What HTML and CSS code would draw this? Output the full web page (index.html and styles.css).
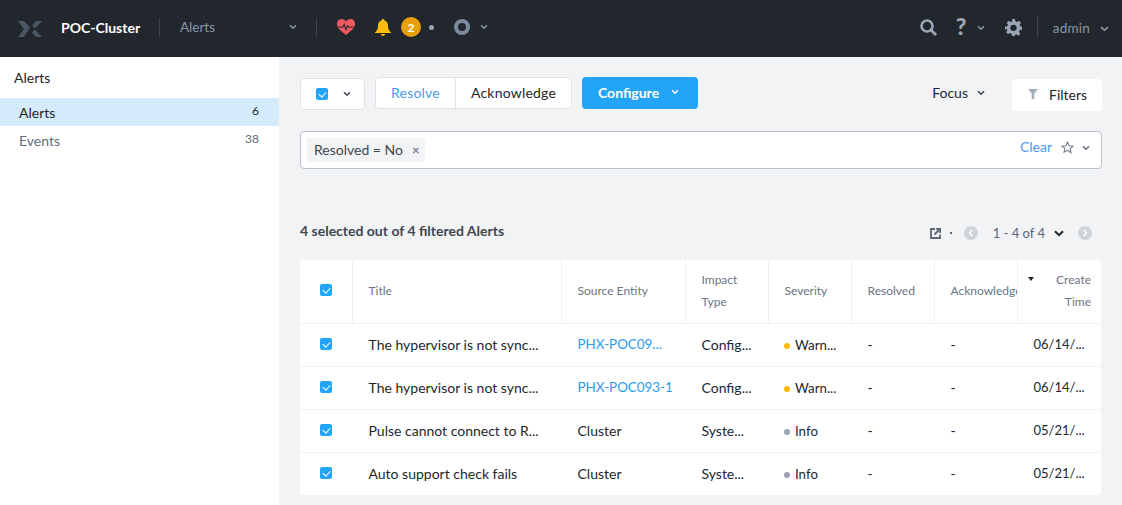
FILE: index.html
```html
<!DOCTYPE html>
<html lang="en">
<head>
<meta charset="utf-8">
<title>Alerts</title>
<link rel="stylesheet" href="styles.css">
</head>
<body>
<header class="topbar">
  <svg class="logo" width="24" height="16" viewBox="0 0 24 16"><path d="M0 0h6l6 6.200L6 16H0l6-8z M24 0h-6l-4 4.600 2.800 3z M24 16h-6l-4-4.600 2.800-3z" fill="#4a5765"/></svg>
  <span class="cluster">POC-Cluster</span>
  <span class="vline vline-a"></span>
  <span class="page-name">Alerts</span>
  <svg class="chev nav-chev" width="8" height="6" viewBox="0 0 8 6"><path d="M1 1.200l3 3 3-3" fill="none" stroke="#8a96a6" stroke-width="1.600"/></svg>
  <span class="vline vline-b"></span>
  <svg class="heart" width="18" height="16" viewBox="0 0 18 16"><path d="M9 16C4 12 0 9 0 4.800 0 2 2 0 4.600 0 6.400 0 8 1 9 2.400 10 1 11.600 0 13.400 0 16 0 18 2 18 4.800 18 9 14 12 9 16z" fill="#ef5a62"/><path d="M1.500 8h4.500l1.200-2.500 1.800 5 1.500-3.500 1 1h5" fill="none" stroke="#22272e" stroke-width="1.100"/></svg>
  <svg class="bell" width="16" height="17" viewBox="0 0 16 17"><path d="M8 0c1 0 1.500.7 1.600 1.500C12 2.300 13 4.300 13 7c0 3 1 4.500 3 6.500v.5H0v-.5C2 11.500 3 10 3 7c0-2.700 1-4.700 3.400-5.500C6.500.7 7 0 8 0zM6 15h4c0 1.200-.9 2-2 2s-2-.8-2-2z" fill="#ffbc0b"/></svg>
  <span class="badge">2</span>
  <span class="dot-sm"></span>
  <span class="ring"></span>
  <svg class="chev ring-chev" width="8" height="6" viewBox="0 0 8 6"><path d="M1 1.200l3 3 3-3" fill="none" stroke="#8a96a6" stroke-width="1.600"/></svg>
  <span class="spacer"></span>
  <svg class="search" width="17" height="17" viewBox="0 0 17 17"><circle cx="7" cy="7" r="5.500" fill="none" stroke="#9aa5b5" stroke-width="2.600"/><path d="M11 11l5 5" stroke="#9aa5b5" stroke-width="2.800"/></svg>
  <span class="help">?</span>
  <svg class="chev help-chev" width="8" height="6" viewBox="0 0 8 6"><path d="M1 1.200l3 3 3-3" fill="none" stroke="#8a96a6" stroke-width="1.600"/></svg>
  <svg class="gear" width="17" height="17" viewBox="0 0 24 24"><path fill="#9aa5b5" fill-rule="evenodd" d="M10 0h4l.7 3.300 2.200.9L19.700 2.400l2.800 2.800-1.800 2.800.9 2.200L24 11v4l-3.300.7-.9 2.200 1.800 2.800-2.800 2.800-2.800-1.800-2.200.9L14 24h-4l-.7-3.300-2.200-.9-2.800 1.800-2.800-2.800 1.800-2.800-.9-2.200L0 15v-4l3.300-.7.900-2.200L2.400 5.200l2.800-2.800 2.800 1.800 2.200-.9zM12 8a4.500 4.500 0 1 0 0 9 4.500 4.500 0 0 0 0-9z"/></svg>
  <span class="vline vline-c"></span>
  <span class="user">admin</span>
  <svg class="chev" width="9" height="6" viewBox="0 0 9 6"><path d="M1 1.200l3.500 3 3.500-3" fill="none" stroke="#8a96a6" stroke-width="1.600"/></svg>
</header>

<div class="shell">
  <aside class="sidebar">
    <div class="side-title">Alerts</div>
    <div class="side-item active"><span>Alerts</span><span class="count">6</span></div>
    <div class="side-item"><span>Events</span><span class="count">38</span></div>
  </aside>

  <main class="main">
    <div class="toolbar">
      <div class="select-btn">
        <span class="check"></span>
        <svg width="8" height="6" viewBox="0 0 8 6"><path d="M1 1.200l3 3 3-3" fill="none" stroke="#3d4652" stroke-width="1.600"/></svg>
      </div>
      <div class="btn-group">
        <span class="grp-btn resolve">Resolve</span>
        <span class="grp-btn ack">Acknowledge</span>
      </div>
      <div class="configure">Configure
        <svg width="8" height="6" viewBox="0 0 8 6"><path d="M1 1.200l3 3 3-3" fill="none" stroke="#fff" stroke-width="1.500"/></svg>
      </div>
      <span class="spacer"></span>
      <div class="focus">Focus
        <svg width="8" height="6" viewBox="0 0 8 6"><path d="M1 1.200l3 3 3-3" fill="none" stroke="#3d4652" stroke-width="1.600"/></svg>
      </div>
      <div class="filters">
        <svg width="10" height="10" viewBox="0 0 10 10"><path d="M0 0h10L6.300 4.800V10H3.700V4.800z" fill="#a7afbc"/></svg>
        Filters
      </div>
    </div>

    <div class="searchbar">
      <span class="chip">Resolved = No <span class="chip-x">×</span></span>
      <span class="spacer"></span>
      <span class="clear">Clear</span>
      <svg class="star" width="13" height="13" viewBox="0 0 24 24"><path d="M12 2l3 6.800 7.300.7-5.500 4.900 1.600 7.200L12 17l-6.400 3.600 1.600-7.200L1.700 9.500 9 8.800z" fill="none" stroke="#76808f" stroke-width="2"/></svg>
      <svg class="bar-chev" width="8" height="6" viewBox="0 0 8 6"><path d="M1 1.200l3 3 3-3" fill="none" stroke="#6a7585" stroke-width="1.600"/></svg>
    </div>

    <div class="summary">
      <span class="summary-text">4 selected out of 4 filtered Alerts</span>
      <span class="spacer"></span>
      <div class="pager">
        <svg width="11" height="11" viewBox="0 0 11 11"><path d="M5 1H1v9h9V6.500" fill="none" stroke="#5b6675" stroke-width="1.800"/><path d="M4.500 6.500L10 1M6 .8h4.200V5" fill="none" stroke="#5b6675" stroke-width="1.800"/></svg>
        <span class="mid-dot"></span>
        <span class="page-btn"><svg width="6" height="8" viewBox="0 0 6 8"><path d="M4.500 1l-3 3 3 3" fill="none" stroke="#fff" stroke-width="1.600"/></svg></span>
        <span class="range">1 - 4 of 4</span>
        <svg class="range-chev" width="10" height="7" viewBox="0 0 10 7"><path d="M1 1.200l4 4 4-4" fill="none" stroke="#22272e" stroke-width="2"/></svg>
        <span class="page-btn"><svg width="6" height="8" viewBox="0 0 6 8"><path d="M1.500 1l3 3-3 3" fill="none" stroke="#fff" stroke-width="1.600"/></svg></span>
      </div>
    </div>

    <div class="table">
      <div class="row head">
        <div class="cell box"><span class="check"></span></div>
        <div class="cell">Title</div>
        <div class="cell">Source Entity</div>
        <div class="cell wrap">Impact Type</div>
        <div class="cell">Severity</div>
        <div class="cell">Resolved</div>
        <div class="cell clip">Acknowledged</div>
        <div class="cell wrap sorted"><span class="caret"></span>Create Time</div>
      </div>
      <div class="row">
        <div class="cell box"><span class="check"></span></div>
        <div class="cell">The hypervisor is not sync...</div>
        <div class="cell link">PHX-POC09...</div>
        <div class="cell">Config...</div>
        <div class="cell sev-cell"><span class="sev warn"></span>Warn...</div>
        <div class="cell">-</div>
        <div class="cell">-</div>
        <div class="cell date">06/14/...</div>
      </div>
      <div class="row">
        <div class="cell box"><span class="check"></span></div>
        <div class="cell">The hypervisor is not sync...</div>
        <div class="cell link">PHX-POC093-1</div>
        <div class="cell">Config...</div>
        <div class="cell sev-cell"><span class="sev warn"></span>Warn...</div>
        <div class="cell">-</div>
        <div class="cell">-</div>
        <div class="cell date">06/14/...</div>
      </div>
      <div class="row">
        <div class="cell box"><span class="check"></span></div>
        <div class="cell">Pulse cannot connect to R...</div>
        <div class="cell">Cluster</div>
        <div class="cell">Syste...</div>
        <div class="cell sev-cell"><span class="sev info"></span>Info</div>
        <div class="cell">-</div>
        <div class="cell">-</div>
        <div class="cell date">05/21/...</div>
      </div>
      <div class="row last">
        <div class="cell box"><span class="check"></span></div>
        <div class="cell">Auto support check fails</div>
        <div class="cell">Cluster</div>
        <div class="cell">Syste...</div>
        <div class="cell sev-cell"><span class="sev info"></span>Info</div>
        <div class="cell">-</div>
        <div class="cell">-</div>
        <div class="cell date">05/21/...</div>
      </div>
    </div>
  </main>
</div>
</body>
</html>
```

FILE: styles.css
```css
* { box-sizing: border-box; }
html, body { margin: 0; height: 100%; overflow: hidden; }
body {
  font-family: "Lato", "Open Sans", "Liberation Sans", sans-serif;
  font-size: 14px;
  color: #22272e;
  background: #f2f3f5;
}
.spacer { flex: 1; }

/* top bar */
.topbar {
  height: 57px;
  background: #22272e;
  display: flex;
  align-items: center;
  padding-left: 18px;
  padding-right: 13px;
  color: #fff;
}
.logo { margin-right: 19px; }
.cluster { font-weight: 700; font-size: 14px; width: 98px; margin-top: -2px; }
.vline { width: 1px; height: 18px; background: #3c444f; }
.page-name { color: #8a96a6; font-size: 13.500px; margin-left: 20px; width: 109px; margin-top: -3px; }
.nav-chev { margin-right: 19px; margin-top: -3px; }
.heart { margin-right: 20px; margin-top: -3px; }
.vline-a, .vline-b { margin-top: -3px; }
.vline-b { margin-right: 20px; }
.bell { margin-right: 10px; margin-top: -3px; }
.badge {
  width: 20px; height: 20px; border-radius: 50%;
  background: #e89f0c; color: #fff; font-weight: 700; font-size: 12px;
  display: flex; align-items: center; justify-content: center;
  margin-right: 8px; margin-top: -3px;
}
.dot-sm { width: 5px; height: 5px; border-radius: 50%; background: #9aa5b5; margin-right: 20px; margin-top: -2px; }
.ring { width: 16px; height: 16px; border-radius: 50%; border: 4px solid #7b8a9e; margin-right: 10px; margin-top: -3px; }
.ring-chev { margin-top: -3px; }
.search { margin-right: 19px; margin-top: -3px; }
.help { color: #9aa5b5; font-weight: 900; font-size: 23px; line-height: 1; width: 11px; margin-right: 10px; margin-top: -5px; }
.help-chev { margin-right: 20px; margin-top: -2px; }
.gear { margin-right: 15px; margin-top: -3px; }
.vline-c { height: 22px; margin-right: 15px; margin-top: -3px; }
.user { color: #8a96a6; font-size: 13.500px; margin-right: 10px; letter-spacing: .2px; margin-top: -2px; }

/* shell */
.shell { display: flex; height: 448px; }
.sidebar { width: 279px; background: #fff; flex: none; }
.side-title { padding: 13px 14px 0; height: 41px; line-height: 15px; }
.side-item {
  height: 28px;
  padding: 0 20px 0 19px;
  display: flex;
  align-items: center;
  justify-content: space-between;
  color: #626e7e;
}
.side-item.active { background: #d3ebfb; color: #22272e; }
.count { font-size: 12px; margin-top: -3px; }

/* main */
.main { flex: 1; padding: 20px 20px 0 21px; min-width: 0; }
.toolbar { display: flex; align-items: flex-start; height: 34px; }
.select-btn {
  width: 65px; height: 32px; margin-top: 1px;
  border: 1px solid #dfe2e7; border-radius: 4px; background: #fff;
  display: flex; align-items: center; gap: 15px; padding-left: 15px;
}
.check {
  display: inline-block; width: 12px; height: 12px; border-radius: 2px;
  background: #22a5f7; position: relative; flex: none;
}
.check::after {
  content: ""; position: absolute; left: 3.500px; top: 2px;
  width: 4px; height: 6px; border: solid #fff; border-width: 0 1.500px 1.500px 0;
  transform: rotate(42deg);
}
.btn-group {
  display: flex; height: 32px; margin-left: 10px;
  border: 1px solid #dfe2e7; border-radius: 4px; background: #fff;
}
.grp-btn { line-height: 30px; letter-spacing: .2px; text-align: center; }
.grp-btn.resolve { width: 80px; color: #4a9bf0; border-right: 1px solid #dfe2e7; }
.grp-btn.ack { width: 115px; }
.configure {
  margin-left: 10px; width: 116px; height: 32px; border-radius: 4px;
  background: #22a5f7; color: #fff; font-weight: 700;
  display: flex; align-items: center; gap: 12px; padding: 0 0 2px 16px;
}
.focus { margin-top: 7px; margin-right: 27px; display: flex; align-items: center; gap: 9px; }
.filters {
  width: 90px; height: 32px; margin-top: 2px; border-radius: 4px; background: #fff;
  display: flex; align-items: center; gap: 11px; padding: 0 0 2px 16px;
}

.searchbar {
  margin-top: 20px; height: 38px;
  border: 1px solid #b9bfca; border-radius: 4px; background: #fff;
  display: flex; align-items: center; padding: 0 11px 0 6px;
}
.chip {
  height: 24px; background: #f2f3f5; border-radius: 3px;
  padding: 0 5px 0 7px; line-height: 24px; display: flex; gap: 9px; color: #3d4652;
}
.chip-x { color: #76808f; font-weight: 700; font-size: 13px; }
.clear { color: #4a9bf0; margin: 0 9px 7px 0; }
.star { margin-bottom: 6px; }
.bar-chev { margin: 0 0 4px 8px; }

.summary {
  margin-top: 50px; height: 24px; display: flex; align-items: center;
  padding-right: 10px;
}
.summary-text { font-weight: 700; color: #3d4652; margin-bottom: 2px; }
.pager { display: flex; align-items: center; margin-top: 4px; }
.mid-dot { width: 2px; height: 2px; background: #5b6675; margin: 0 12px 0 9px; }
.page-btn {
  width: 14px; height: 14px; border-radius: 50%; background: #cfd4db;
  display: flex; align-items: center; justify-content: center;
}
.range { color: #5b6675; font-size: 13px; margin-left: 15px; margin-right: 9px; }
.range-chev { margin-right: 14px; }

/* table */
.table {
  margin-top: 17px; background: #fff; border-radius: 4px; overflow: hidden; width: 801px;
}
.row {
  display: grid;
  grid-template-columns: 53px 209px 124px 83px 83px 83px 83px 83px;
  height: 43px;
  border-bottom: 1px solid #f0f1f3;
}
.row.last { border-bottom: 0; height: 42px; }
.row.head { height: 64px; color: #6a7585; font-size: 12px; }
.cell {
  padding: 0 0 2px 15.500px;
  display: flex; align-items: center;
  white-space: nowrap; overflow: hidden;
}
.head .cell { border-right: 1px solid #f0f1f3; }
.head .cell:last-child { border-right: 0; }
.cell.box { padding: 0 0 3px 20px; }
.head .cell.box { padding-bottom: 4px; }
.cell.wrap { white-space: normal; line-height: 22px; padding-right: 20px; }
.cell.sorted { padding: 0 10px 2px 30px; text-align: right; justify-content: flex-end; position: relative; }
.caret {
  position: absolute; left: 10px; top: 17px;
  border: 3.500px solid transparent; border-top: 4px solid #22272e; border-bottom: 0;
}
.link { color: #2a9bee; font-size: 13.400px; }
.date { font-size: 13px; }
.cell.sev-cell { padding-left: 15px; padding-bottom: 1px; font-size: 13.300px; }
.sev { width: 6px; height: 6px; border-radius: 50%; margin-right: 5px; margin-top: 2px; flex: none; }
.sev.warn { background: #ffb60a; }
.sev.info { background: #9aa3b3; }
```
